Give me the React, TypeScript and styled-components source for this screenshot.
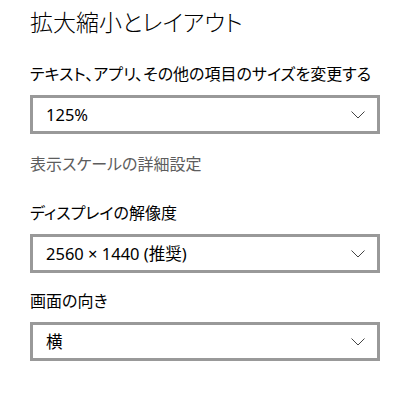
import React from "react";
import styled, { createGlobalStyle } from "styled-components";

const Global = createGlobalStyle`
  html, body { margin: 0; padding: 0; background: #fff; }
  body {
    font-family: "Noto Sans", "Noto Sans CJK JP", sans-serif;
    color: #000;
  }
`;

const Page = styled.div`
  display: flex;
  flex-direction: column;
  width: 350px;
  padding: 5px 0 0 30px;
`;

const Title = styled.h1`
  margin: 0;
  font-family: "Noto Sans CJK JP", sans-serif;
  font-weight: 300;
  font-size: 23px;
  line-height: 32px;
  font-feature-settings: "palt";
  color: #000;
`;

const Label = styled.div<{ $top: number }>`
  margin-top: ${(p) => p.$top}px;
  font-family: "Noto Sans CJK JP", sans-serif;
  font-size: 16px;
  line-height: 20px;
  font-feature-settings: "palt";
  color: #000;
`;

const Link = styled(Label)`
  color: #5d5d5d;
`;

const Select = styled.div`
  margin-top: 12px;
  box-sizing: border-box;
  height: 39px;
  border: 3px solid #999;
  display: flex;
  align-items: center;
  justify-content: space-between;
  padding: 0 12px 0 13px;
  background: #fff;
`;

const Value = styled.span`
  font-family: "Noto Sans", "Noto Sans CJK JP", sans-serif;
  font-size: 16.5px;
  line-height: 20px;
  color: #000;
`;

const Chevron = () => (
  <svg width="14" height="8" viewBox="0 0 14 8">
    <polyline points="0.5,0.5 7,7 13.5,0.5" fill="none" stroke="#444" strokeWidth="1" />
  </svg>
);

const Dropdown = ({ value }: { value: string }) => (
  <Select>
    <Value>{value}</Value>
    <Chevron />
  </Select>
);

export default function App() {
  return (
    <>
      <Global />
      <Page>
        <Title>拡大縮小とレイアウト</Title>
        <Label $top={26}>テキスト、アプリ、その他の項目のサイズを変更する</Label>
        <Dropdown value="125%" />
        <Link $top={19}>表示スケールの詳細設定</Link>
        <Label $top={29}>ディスプレイの解像度</Label>
        <Dropdown value="2560 × 1440 (推奨)" />
        <Label $top={17}>画面の向き</Label>
        <Dropdown value="横" />
      </Page>
    </>
  );
}
